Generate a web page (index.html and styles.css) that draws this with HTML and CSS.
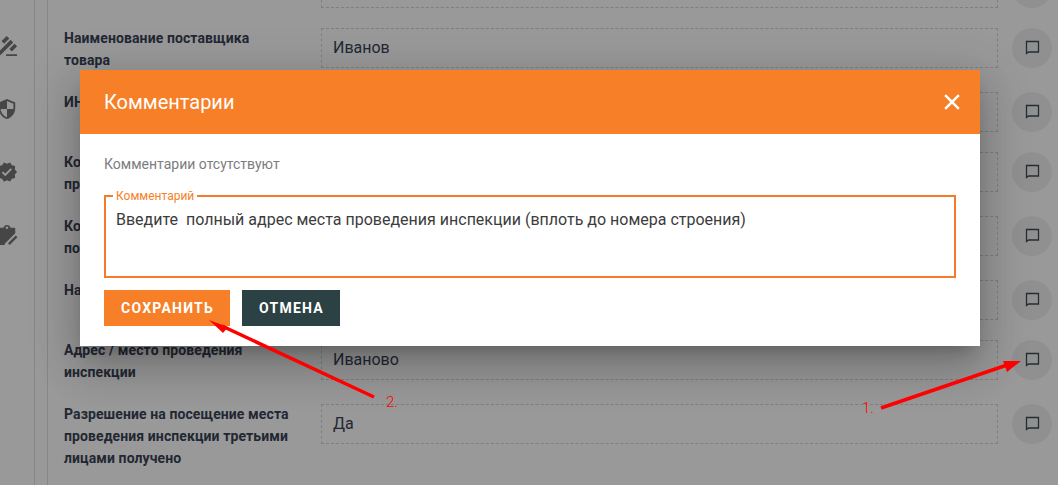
FILE: index.html
```html
<!DOCTYPE html>
<html lang="ru">
<head>
<meta charset="utf-8">
<title>Комментарии</title>
<link rel="stylesheet" href="styles.css">
</head>
<body>
<div class="page">
  <aside class="rail">
    <svg class="rail-icon" viewBox="0 0 24 24"><path transform="matrix(-1 0 0 1 24 0)" d="M1 21h12v2H1v-2zM5.245 8.07l2.83-2.827 14.14 14.142-2.828 2.828L5.245 8.07zM12.317 1l5.657 5.656-2.83 2.83-5.654-5.66L12.317 1zM3.825 9.485l5.657 5.657-2.828 2.828-5.657-5.657 2.828-2.828z"/></svg>
    <svg class="rail-icon" viewBox="0 0 24 24"><path transform="matrix(-1 0 0 1 24 0)" d="M12 1L3 5v6c0 5.55 3.84 10.74 9 12 5.16-1.26 9-6.45 9-12V5l-9-4zm0 10.99h7c-.53 4.12-3.28 7.79-7 8.94V12H5V6.3l7-3.11v8.8z"/></svg>
    <svg class="rail-icon" viewBox="0 0 24 24"><path d="M23 12l-2.44-2.79.34-3.69-3.61-.82-1.89-3.2L12 2.96 8.6 1.5 6.71 4.69 3.1 5.5l.34 3.7L1 12l2.44 2.79-.34 3.7 3.61.82L8.6 22.5l3.4-1.47 3.4 1.46 1.89-3.19 3.61-.82-.34-3.69L23 12zm-12.91 4.72l-3.8-3.81 1.48-1.48 2.32 2.33 5.85-5.87 1.48 1.48-7.33 7.35z"/></svg>
    <svg class="rail-icon" viewBox="0 0 24 24"><path fill-rule="evenodd" d="M1 4h7.2a3.9 3.9 0 0 1 7.6 0H20a1 1 0 0 1 1 1v5L9.5 21.500V23H1zM12 2.600a1.400 1.400 0 1 0 .01 0z"/><path class="pencil" d="M22.500 13.500L14 22"/></svg>
  </aside>
  <div class="rail-gap"></div>
  <main class="form">
    <div class="row"><div class="label"></div><div class="value"></div><div class="comment"><svg viewBox="0 0 16 16"><path d="M2.500 1.500h12v10.500h-10l-2 1.500z"/></svg></div></div>
    <div class="row"><div class="label">Наименование поставщика товара</div><div class="value">Иванов</div><div class="comment"><svg viewBox="0 0 16 16"><path d="M2.500 1.500h12v10.500h-10l-2 1.500z"/></svg></div></div>
    <div class="row"><div class="label">ИНН поставщика</div><div class="value"></div><div class="comment"><svg viewBox="0 0 16 16"><path d="M2.500 1.500h12v10.500h-10l-2 1.500z"/></svg></div></div>
    <div class="row"><div class="label">Контактное лицо поставщика представитель</div><div class="value"></div><div class="comment"><svg viewBox="0 0 16 16"><path d="M2.500 1.500h12v10.500h-10l-2 1.500z"/></svg></div></div>
    <div class="row"><div class="label">Контактный номер телефона поставщика</div><div class="value"></div><div class="comment"><svg viewBox="0 0 16 16"><path d="M2.500 1.500h12v10.500h-10l-2 1.500z"/></svg></div></div>
    <div class="row"><div class="label">Наименование товара</div><div class="value"></div><div class="comment"><svg viewBox="0 0 16 16"><path d="M2.500 1.500h12v10.500h-10l-2 1.500z"/></svg></div></div>
    <div class="row"><div class="label">Адрес / место проведения инспекции</div><div class="value">Иваново</div><div class="comment"><svg viewBox="0 0 16 16"><path d="M2.500 1.500h12v10.500h-10l-2 1.500z"/></svg></div></div>
    <div class="row"><div class="label">Разрешение на посещение места проведения инспекции третьими лицами получено</div><div class="value">Да</div><div class="comment"><svg viewBox="0 0 16 16"><path d="M2.500 1.500h12v10.500h-10l-2 1.500z"/></svg></div></div>
  </main>
</div>

<div class="overlay"></div>

<section class="modal">
  <header class="modal-head">
    <h2 class="modal-title">Комментарии</h2>
    <svg class="modal-close" viewBox="0 0 14 14"><path d="M1 1l12 12M13 1L1 13"/></svg>
  </header>
  <div class="modal-body">
    <p class="empty">Комментарии отсутствуют</p>
    <fieldset class="field">
      <legend class="field-legend">Комментарий</legend>
      <div class="field-text">Введите  полный адрес места проведения инспекции (вплоть до номера строения)</div>
    </fieldset>
    <div class="actions">
      <button class="btn btn-save">Сохранить</button>
      <button class="btn btn-cancel">Отмена</button>
    </div>
  </div>
</section>

<svg class="marks" viewBox="0 0 1058 485">
  <path class="mark-line" d="M881 408L1010 364"/>
  <path class="mark-head" d="M1021 361L1003 361L1007 372z"/>
  <path class="mark-line" d="M374 397L222 326"/>
  <path class="mark-head" d="M209 320L228 327L223 333z"/>
  <text class="mark-text" x="386" y="407">2.</text>
  <text class="mark-text" x="862" y="413">1.</text>
</svg>
</body>
</html>
```
FILE: styles.css
```css
* { box-sizing: border-box; }
html, body { margin: 0; height: 100%; }
body {
  position: relative;
  width: 1058px;
  height: 485px;
  overflow: hidden;
  background: #fff;
  font-family: Roboto, "Liberation Sans", sans-serif;
}
.page { display: flex; height: 485px; overflow: hidden; }
.rail {
  width: 35px;
  flex: none;
  border-right: 1px solid #e0e0e0;
  padding-top: 35px;
  display: flex;
  flex-direction: column;
  gap: 41px;
  overflow: hidden;
}
.rail-icon { width: 22px; height: 22px; margin-left: -4px; flex: none; fill: #757575; }
.pencil { fill: none; stroke: #757575; stroke-width: 2.6; }
.rail-gap { width: 13px; flex: none; border-right: 1px solid #e0e0e0; }
.form { padding: 0 0 0 16px; margin-top: -34px; flex: none; width: 1010px; }
.row {
  display: grid;
  grid-template-columns: 257px 677px 40px;
  column-gap: 0;
  min-height: 40px;
  margin-bottom: 20px;
}
.label {
  width: 232px;
  margin-top: 1px;
  margin-bottom: -1px;
  font-size: 14px;
  font-weight: 700;
  letter-spacing: .1px;
  line-height: 22px;
  color: #3a4356;
}
.value {
  height: 40px;
  margin-top: 2px;
  margin-bottom: -2px;
  border: 1px dashed #d4d4d4;
  padding: 0 11px;
  font-size: 16px;
  line-height: 38px;
  color: #3a4356;
}
.comment {
  width: 40px;
  height: 40px;
  margin: 2px 0 -2px 14px;
  border-radius: 50%;
  background: #f1f1f1;
  display: flex;
  align-items: center;
  justify-content: center;
}
.comment svg { width: 16px; height: 16px; fill: none; stroke: #3c4c58; stroke-width: 1.3; }
.overlay { position: absolute; inset: 0; background: rgba(0, 0, 0, .4); }
.modal {
  position: absolute;
  left: 80px;
  top: 70px;
  width: 900px;
  height: 276px;
  background: #fff;
  box-shadow: 0 11px 15px -7px rgba(0,0,0,.2), 0 24px 38px 3px rgba(0,0,0,.14), 0 9px 46px 8px rgba(0,0,0,.12);
}
.modal-head {
  height: 64px;
  background: #f67f28;
  display: flex;
  align-items: center;
  justify-content: space-between;
  padding: 0 20px 0 24px;
}
.modal-title { margin: 0; font-size: 20px; font-weight: 400; color: #fff; }
.modal-close { width: 16px; height: 16px; fill: none; stroke: #fff; stroke-width: 2.2; }
.modal-body { padding: 22px 24px 0; }
.empty { margin: 0; font-size: 14px; line-height: 16px; color: #7d7d7d; }
.field {
  margin: 17px 0 0;
  padding: 0 10px;
  height: 89px;
  border: 2px solid #f47b2a;
  min-width: 0;
}
.field-legend { margin-left: -3px; padding: 0 3px; font-size: 12px; line-height: 14px; color: #f67f28; }
.field-text { white-space: pre-wrap; font-size: 16px; line-height: 20px; color: #3c3c3c; margin-top: 7px; }
.actions { display: flex; gap: 12px; margin-top: 12px; }
.btn {
  height: 36px;
  border: 0;
  padding: 0 16px 0 17px;
  font: 700 14px Roboto, "Liberation Sans", sans-serif;
  letter-spacing: 1.25px;
  text-transform: uppercase;
  color: #fff;
}
.btn-save { background: #f67f28; }
.btn-cancel { background: #2c4144; }
.marks { position: absolute; left: 0; top: 0; width: 1058px; height: 485px; pointer-events: none; }
.mark-line { fill: none; stroke: #ff0000; stroke-width: 3.5; }
.mark-head { fill: #ff0000; }
.mark-text { fill: #ff0000; font: 300 15px Roboto, "Liberation Sans", sans-serif; }
```
